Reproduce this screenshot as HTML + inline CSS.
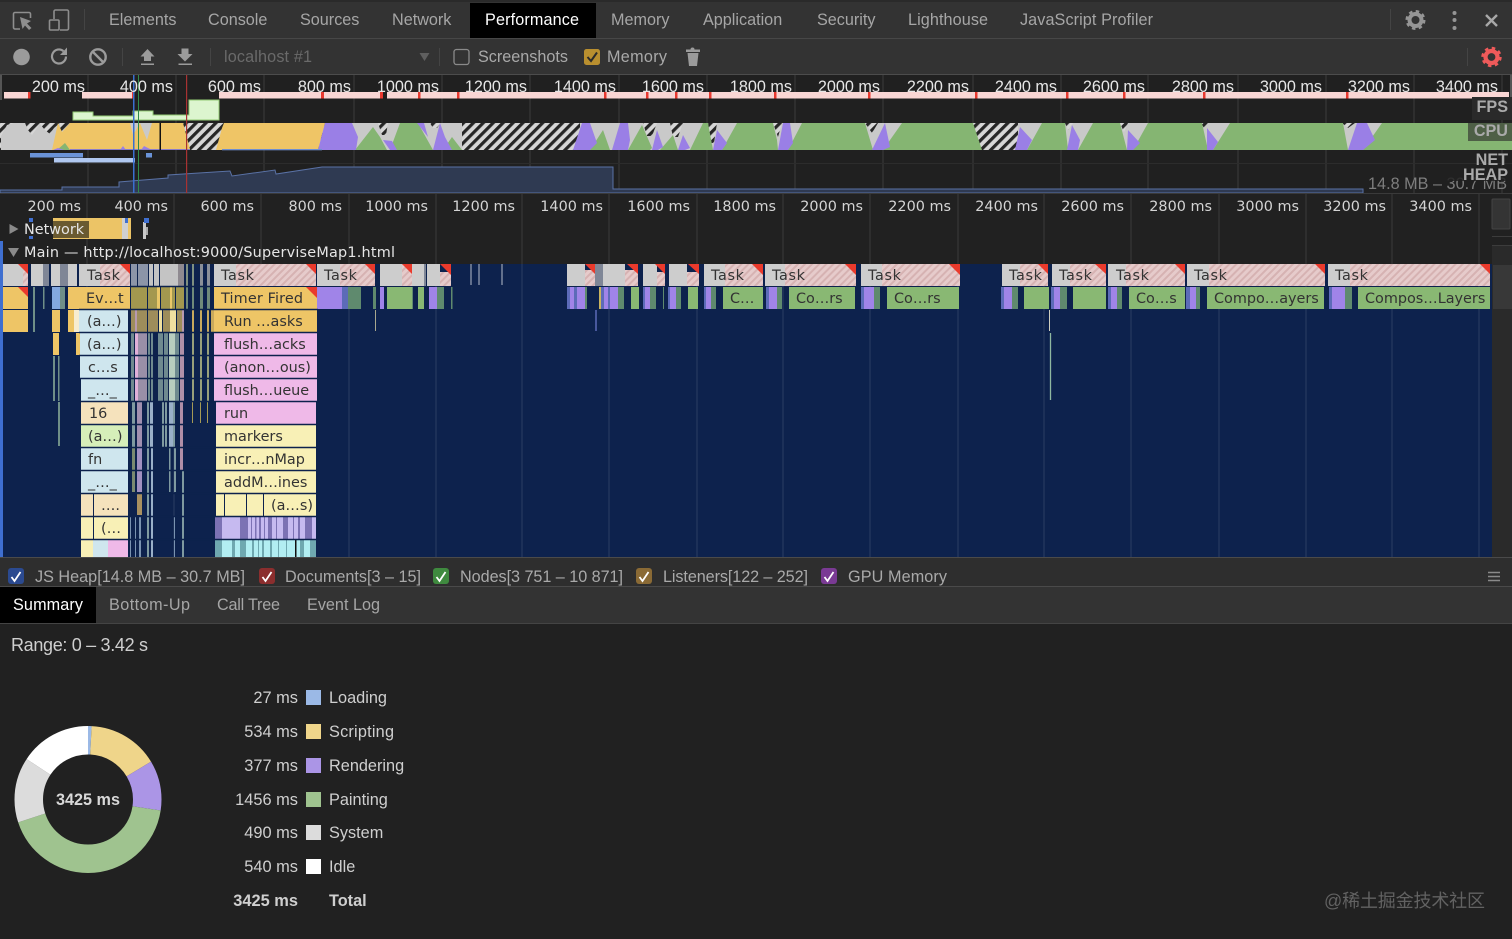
<!DOCTYPE html>
<html><head><meta charset="utf-8"><title>Performance</title>
<style>
html,body{margin:0;padding:0;background:#212121;overflow:hidden}
svg{display:block;position:absolute;left:0;top:0;filter:blur(.3px)}
text{font-family:"Liberation Sans",sans-serif;font-size:16.2px;fill:#a9a9a9}
.tab{fill:#a6a6a6}
.ov{fill:#e6e6e6;text-anchor:end}
.ru{font-family:"DejaVu Sans",sans-serif;font-size:14.4px;fill:#d4d4d4;text-anchor:end}
.f{font-family:"DejaVu Sans",sans-serif;font-size:14.4px;fill:#333}
.lb{font-weight:bold;text-anchor:end;fill:#aaa}
.n{fill:#cfcfcf;text-anchor:end;font-size:16.4px}
.l{fill:#cfcfcf;font-size:16.3px}
</style></head><body>
<svg width="1512" height="939" viewBox="0 0 1512 939" xmlns="http://www.w3.org/2000/svg">
<defs>
<pattern id="ch" width="7" height="7" patternUnits="userSpaceOnUse" patternTransform="rotate(-45)"><rect width="7" height="7" fill="#d6d6d6"/><rect width="7" height="3.2" fill="#262626"/></pattern>
<pattern id="th" width="5" height="5" patternUnits="userSpaceOnUse" patternTransform="rotate(-45)"><rect width="5" height="5" fill="#e6cbcb"/><rect width="5" height="2" fill="#d6b2b2"/></pattern>
</defs>
<rect width="1512" height="939" fill="#212121"/>
<!-- top tabs -->
<rect y="0" width="1512" height="75" fill="#333"/>
<rect y="0" width="1512" height="2" fill="#2a2a2a"/>
<rect y="38" width="1512" height="1" fill="#474747"/>
<rect y="74" width="1512" height="1" fill="#4c4c4c"/>
<rect x="470" y="3" width="126" height="35" fill="#000"/>
<g fill="none" stroke="#8e8e8e" stroke-width="1.6">
<path d="M20 29H15a1.5 1.5 0 0 1-1.5-1.5V14A1.5 1.5 0 0 1 15 12.500H29A1.500 1.500 0 0 1 30.500 14V18"/>
<rect x="49.500" y="20" width="9.500" height="10" rx="1"/>
<path d="M54 19V11.500a1.500 1.500 0 0 1 1.500-1.500H67a1.500 1.500 0 0 1 1.500 1.500V28.500A1.500 1.500 0 0 1 67 30H60"/>
</g>
<path d="M20 17 31 21 27 23.500 31.500 28 29 30 25 25.500 22.500 29Z" fill="#8e8e8e"/>
<rect x="84" y="9" width="1" height="21" fill="#444"/>
<text class="tab" x="109" y="25">Elements</text>
<text class="tab" x="208" y="25">Console</text>
<text class="tab" x="300" y="25">Sources</text>
<text class="tab" x="392" y="25">Network</text>
<text x="485" y="25" style="fill:#fff" textLength="94">Performance</text>
<text class="tab" x="611" y="25">Memory</text>
<text class="tab" x="703" y="25">Application</text>
<text class="tab" x="817" y="25">Security</text>
<text class="tab" x="908" y="25" textLength="80">Lighthouse</text>
<text class="tab" x="1020" y="25" textLength="133">JavaScript Profiler</text>
<rect x="1390" y="9" width="1" height="21" fill="#444"/>
<circle cx="1415.500" cy="20" r="6" fill="none" stroke="#959595" stroke-width="4"/>
<circle cx="1415.500" cy="20" r="8.500" fill="none" stroke="#959595" stroke-width="3" stroke-dasharray="3.400 3.270"/>
<circle cx="1454.500" cy="13" r="2" fill="#959595"/><circle cx="1454.500" cy="20" r="2" fill="#959595"/><circle cx="1454.500" cy="28" r="2" fill="#959595"/>
<path d="M1486 15 1497 26M1497 15 1486 26" stroke="#a8a8a8" stroke-width="2.400"/>
<!-- second toolbar -->
<circle cx="21.500" cy="57" r="8.300" fill="#9b9b9b"/>
<path d="M66 56.500a7 7 0 1 1-2.500-5.400" fill="none" stroke="#9b9b9b" stroke-width="2.200"/>
<path d="M67 47.500V55H60Z" fill="#9b9b9b"/>
<circle cx="98" cy="57" r="7.700" fill="none" stroke="#9b9b9b" stroke-width="2.400"/>
<path d="M92.500 51.500 103.500 62.500" stroke="#9b9b9b" stroke-width="2.400"/>
<rect x="122" y="48" width="1" height="18" fill="#444"/>
<path d="M147.500 49 154.500 56.500H151V61H144V56.500H140.500ZM141 63.500H154V65H141Z" fill="#9b9b9b"/>
<path d="M181.500 48.500H188.500V54H192.500L185 61.500 177.500 54H181.500ZM178.500 63.500H192V65H178.500Z" fill="#9b9b9b"/>
<rect x="210" y="48" width="1" height="18" fill="#444"/>
<text x="224" y="62" style="fill:#6a6a6a" textLength="88">localhost #1</text>
<path d="M419.500 53H429.500L424.500 61Z" fill="#5f5f5f"/>
<rect x="439" y="48" width="1" height="18" fill="#444"/>
<rect x="454" y="49.500" width="15" height="15" rx="2.500" fill="none" stroke="#8a8a8a" stroke-width="1.300"/>
<text x="478" y="62" textLength="90">Screenshots</text>
<rect x="584" y="49" width="16" height="16" rx="2.500" fill="#b98f2f"/>
<path d="M587.500 57 591 61 597 52.500" fill="none" stroke="#2b2b2b" stroke-width="2"/>
<text x="607" y="62" textLength="60">Memory</text>
<path d="M690.500 49.500a2 2 0 0 1 4 0H700V52H686V49.500ZM687.500 53H698.500L697 66H689Z" fill="#9b9b9b"/>
<rect x="1467" y="48" width="1" height="18" fill="#444"/>
<circle cx="1491.500" cy="57" r="6" fill="none" stroke="#ee5a5a" stroke-width="4.200"/>
<circle cx="1491.500" cy="57" r="8.700" fill="none" stroke="#ee5a5a" stroke-width="3" stroke-dasharray="3.400 3.430"/>
<!-- overview -->
<rect y="75" width="1512" height="119" fill="#202020"/>
<rect x="0" y="75" width="2" height="25" fill="#555"/>
<rect x="1510" y="75" width="2" height="25" fill="#555"/>
<path d="M88 75v118M176 75v118M264 75v118M354 75v118M442 75v118M530 75v118M619 75v118M707 75v118M795 75v118M883 75v118M973 75v118M1061 75v118M1148 75v118M1238 75v118M1326 75v118M1414 75v118M1502 75v118" stroke="#3c3c3c"/>
<rect y="163" width="1512" height="1" fill="#2c2c2c"/>
<!-- fps -->
<path d="M4 92H30V98.500H4ZM82 92H133V98.500H82ZM219 92H383V98.500H219ZM387 92H1509V98.500H387Z" fill="#f9d6d4"/>
<path d="M28 92h2.500v6.500H28ZM132 92h2v6.500h-2ZM321 92h3v6.500h-3ZM380 92h3v6.500h-3ZM418 92h2.500v6.500H418ZM457 92h2.500v6.500H457ZM604 92h2.500v6.500H604ZM646 92h2.500v6.500H646ZM675 92h2.500v6.500H675ZM709 92h2.500v6.500H709ZM774 92h2.500v6.500H774ZM868 92h2.500v6.500H868ZM975 92h2.500v6.500H975ZM1066 92h2.500v6.500H1066ZM1123 92h2.500v6.500H1123ZM1203 92h2.500v6.500H1203ZM1346 92h2.500v6.500H1346Z" fill="#e8392f"/>
<path d="M73 120V112H93V116H133V111H153V115H189V100H219V120Z" fill="#dcf5cf" stroke="#93cc75" stroke-width="1"/>
<!-- cpu -->
<rect y="123" width="1512" height="27" fill="url(#ch)"/>
<path fill="#c9c9c9" d="M1 150V136L7 125 14 123 25 123 28 130 32 135 37 128 40 124 45 130 50 134 54 128 60 123 V150ZM130 123H158V150H130ZM352 123H462V150H352ZM580 123H973V150H580ZM1018 123H1512V150H1018Z"/>
<path fill="url(#ch)" d="M378 123H388L386 135 382 135ZM430 123H441L437 128 433 128ZM643 123H657L652 136 647 136ZM670 123H683L678 137 673 137ZM708 123H717L714 143 711 143ZM773 123H782L778 137ZM865 123H878L872 133ZM1065 123H1073L1068 130ZM1120 123H1128L1124 132ZM1201 123H1208L1204 128ZM1342 123H1355L1348 128Z"/>
<path fill="#efc566" d="M52 150 58 123 62 132 70 123H130L133 135 140 123 147 140 152 123H183L190 149ZM216 150 222 128 224 123 325 123 318 150Z"/>
<path fill="#85b572" d="M355 150 373 127 380 137 387 150ZM57 150 65 143 70 150ZM390 150 400 123H418L433 150ZM443 150 452 137 462 150ZM590 150 603 130 610 150ZM628 150 642 125 652 148 650 150ZM660 150 673 135 678 150ZM690 150 703 123H708L713 150ZM722 150 737 123H773L777 140 778 150ZM788 150 802 123H865L873 150ZM883 150 902 123H973L982 150ZM1027 150 1042 123H1065L1068 150ZM1078 150 1093 123H1120L1127 150ZM1133 150 1148 123H1202L1208 150ZM1213 150 1230 123H1343L1348 150ZM1363 150 1382 123H1512V150Z"/>
<path fill="#9a7fe6" d="M325 123H352L358 137 356 150H318ZM383 140 390 150H397L392 141ZM433 150 440 123 445 137 452 150ZM417 123H424L428 137ZM53 150 58 148 64 150ZM120 150 123 146 126 150ZM141 150 144 146 152 150ZM573 150 582 123H590L597 143 590 150ZM612 150 620 123H628L630 140 628 150ZM652 150 657 130 663 147 658 150ZM678 150 683 135 690 148 685 150ZM713 150 717 130 727 143 722 150ZM778 150 783 123H790L793 143 788 150ZM872 150 885 123 890 147 883 150ZM1015 150 1020 127 1032 140 1027 150ZM1067 150 1072 125 1080 140 1078 150ZM1127 150 1128 130 1140 143 1133 150ZM1207 150 1207 128 1218 142 1213 150ZM1348 150 1357 123H1367L1375 140 1363 150Z"/>
<rect x="70" y="149" width="120" height="1" fill="#8a7dc8"/>
<rect x="222" y="149" width="100" height="1.300" fill="#6f8fd0"/>
<rect x="159.500" y="123" width="1.500" height="27" fill="#111"/>
<!-- net -->
<rect x="30" y="153" width="53" height="4.500" fill="#6a93d8"/>
<rect x="54" y="158" width="81" height="4.500" fill="#b0c8f0"/>
<rect x="146" y="153" width="6" height="4.500" fill="#6a93d8"/>
<!-- heap -->
<path d="M0 193V190H62V187H119V182L168 178V175L230 171 232 176 275 170 276 174 322 167H613V189H1363V193Z" fill="#2f3a52" stroke="#5a72a6" stroke-width="1"/>
<!-- markers -->
<rect x="133" y="75" width="1.500" height="118" fill="#3a6fd0"/>
<rect x="138" y="75" width="1" height="118" fill="#2f8a4c"/>
<rect x="186" y="75" width="1.200" height="118" fill="#a83232"/>
<!-- overview labels -->
<text class="ov" x="85" y="92">200 ms</text><text class="ov" x="173" y="92">400 ms</text><text class="ov" x="261" y="92">600 ms</text><text class="ov" x="351" y="92">800 ms</text><text class="ov" x="439" y="92">1000 ms</text><text class="ov" x="527" y="92">1200 ms</text><text class="ov" x="616" y="92">1400 ms</text><text class="ov" x="704" y="92">1600 ms</text><text class="ov" x="792" y="92">1800 ms</text><text class="ov" x="880" y="92">2000 ms</text><text class="ov" x="969" y="92">2200 ms</text><text class="ov" x="1057" y="92">2400 ms</text><text class="ov" x="1145" y="92">2600 ms</text><text class="ov" x="1234" y="92">2800 ms</text><text class="ov" x="1322" y="92">3000 ms</text><text class="ov" x="1410" y="92">3200 ms</text><text class="ov" x="1498" y="92">3400 ms</text>
<rect x="1472" y="97" width="40" height="23" fill="#2a2a2a"/>
<text class="lb" x="1508" y="112">FPS</text>
<rect x="1468" y="123" width="44" height="18" fill="#4e5f46"/>
<text class="lb" x="1508" y="136">CPU</text>
<text class="lb" x="1508" y="165">NET</text>
<text x="1507" y="189" style="text-anchor:end;fill:#7e7e7e" textLength="139">14.8 MB – 30.7 MB</text>
<rect x="1440" y="166" width="72" height="15" fill="#212121" opacity=".85"/>
<text class="lb" x="1508" y="180">HEAP</text>
<rect y="193" width="1512" height="1" fill="#3a3a3a"/>
<!-- flame chart bg -->
<rect y="194" width="1512" height="70" fill="#212121"/>
<rect y="264" width="1492" height="293" fill="#0d224d"/>
<rect x="0" y="241" width="3" height="316" fill="#3f6fd0"/>
<rect x="1492" y="245" width="20" height="312" fill="#2a2a2a"/>
<rect x="1492" y="199" width="18" height="30" rx="1" fill="#343434" stroke="#444"/>
<rect x="1492" y="236" width="20" height="1" fill="#3c3c3c"/>
<rect x="1492" y="245" width="20" height="1" fill="#3c3c3c"/>
<rect x="1493" y="265" width="19" height="44" fill="#383838"/>
<path d="M87 194V264M174 194V264M261 194V264M349 194V264M436 194V264M522 194V264M609 194V264M697 194V264M783 194V264M870 194V264M958 194V264M1044 194V264M1131 194V264M1219 194V264M1306 194V264M1392 194V264M1479 194V264" stroke="#3a3a3a"/>
<path d="M87 264V557M174 264V557M261 264V557M349 264V557M436 264V557M522 264V557M609 264V557M697 264V557M783 264V557M870 264V557M958 264V557M1044 264V557M1131 264V557M1219 264V557M1306 264V557M1392 264V557M1479 264V557" stroke="#2c3e63"/>
<text class="ru" x="81" y="211">200 ms</text><text class="ru" x="168" y="211">400 ms</text><text class="ru" x="254" y="211">600 ms</text><text class="ru" x="342" y="211">800 ms</text><text class="ru" x="428" y="211">1000 ms</text><text class="ru" x="515" y="211">1200 ms</text><text class="ru" x="603" y="211">1400 ms</text><text class="ru" x="690" y="211">1600 ms</text><text class="ru" x="776" y="211">1800 ms</text><text class="ru" x="863" y="211">2000 ms</text><text class="ru" x="951" y="211">2200 ms</text><text class="ru" x="1038" y="211">2400 ms</text><text class="ru" x="1124" y="211">2600 ms</text><text class="ru" x="1212" y="211">2800 ms</text><text class="ru" x="1299" y="211">3000 ms</text><text class="ru" x="1386" y="211">3200 ms</text><text class="ru" x="1472" y="211">3400 ms</text>
<!-- network row -->
<rect x="53" y="218" width="69" height="21" fill="#ecc466"/>
<rect x="53" y="221" width="36" height="17" fill="#6a5a30"/>
<rect x="122" y="218" width="6" height="21" fill="#d0d0d0"/>
<rect x="128" y="218" width="3" height="21" fill="#ecc466"/>
<rect x="125" y="218" width="3" height="5" fill="#3f6fd0"/>
<rect x="143" y="222" width="3" height="17" fill="#c8c8c8"/>
<rect x="144" y="218" width="5" height="5" fill="#3f6fd0"/>
<rect x="146" y="227" width="2" height="8" fill="#aaa"/>
<rect x="29" y="218" width="4" height="4" fill="#3f6fd0"/>
<rect x="29" y="236" width="4" height="3" fill="#3f6fd0"/>
<path d="M9.500 224 18.500 229 9.500 234Z" fill="#8a8a8a"/>
<text x="24" y="234" style="font-family:'DejaVu Sans',sans-serif;font-size:14.4px;fill:#e6e6e6">Network</text>
<path d="M8 248H19L13.500 257Z" fill="#8a8a8a"/>
<text x="24" y="257" textLength="371" style="font-family:'DejaVu Sans',sans-serif;font-size:14.4px;fill:#e6e6e6">Main — http://localhost:9000/SuperviseMap1.html</text>
<!-- row 0 tasks -->
<path fill="#cdcdcd" d="M3 264h25v22H3ZM31 264h12v22H31ZM51 264h9v22H51ZM68 264h9v22H68ZM79 264h21v22H79ZM214 264h22v22H214ZM317 264h23v22H317ZM380 264h22v22H380ZM412 264h12v22H412ZM427 264h13v22H427ZM567 264h18v22H567ZM603 264h22v22H603ZM643 264h14v22H643ZM669 264h18v22H669ZM704 264h21v22H704ZM765 264h20v22H765ZM861 264h21v22H861ZM1002 264h18v22H1002ZM1052 264h18v22H1052ZM1108 264h18v22H1108ZM1187 264h22v22H1187ZM1328 264h22v22H1328Z"/>
<path fill="#7f8696" d="M43 264h6v22H43ZM60 264h8v22H60ZM424 264h2v22h-2ZM595 264h8v22h-8Z"/>
<path fill="url(#th)" d="M23 271h5v15h-5ZM100 264h30v22H100ZM236 264h80v22H236ZM340 264h35v22H340ZM402 264h10v22H402ZM440 272h11v14H440ZM585 270h10v16H585ZM625 270h13v16H625ZM657 272h8v14H657ZM687 272h12v14H687ZM725 264h38v22H725ZM785 264h71v22H785ZM882 264h78v22H882ZM1020 264h28v22H1020ZM1070 264h36v22H1070ZM1126 264h59v22H1126ZM1209 264h116v22H1209ZM1350 264h140v22H1350Z"/>
<path fill="#ea3a2c" d="M18 264H28V274ZM120 264H130V274ZM306 264H316V274ZM365 264H375V274ZM402 264H412V274ZM440 264H451V275ZM585 264H595V274ZM627 264H638V274ZM655 264H665V274ZM688 264H699V274ZM752 264H763V275ZM845 264H856V275ZM949 264H960V275ZM1038 264H1048V274ZM1095 264H1106V274ZM1175 264H1185V274ZM1315 264H1325V274ZM1480 264H1490V274Z"/>
<path d="M471 264v21M479 264v21M502 264v21" stroke="#b8bfcc"/>
<!-- dense strips -->
<path fill="#8c95a8" d="M131 264h6v22h-6ZM138 264h10v22h-10Z"/>
<path fill="#c4c4c4" d="M149 264h4v22h-4ZM154 264h5v22h-5ZM160 264h18v22h-18Z"/>
<path fill="#8f8a90" d="M178 264h6v22h-6Z"/>
<path fill="#7f9080" d="M186 264h2v22h-2ZM192 264h2v22h-2Z"/>
<path fill="#8a8f98" d="M200 264h3v22h-3ZM207 264h3v22h-3Z"/>
<path fill="#a3984f" d="M131 287h16v22h-16ZM148 287h9v22h-9ZM161 287h14v22h-14ZM176 287h8v22h-8Z"/>
<path fill="#eac869" d="M157 287h3v22h-3ZM170 287h2v22h-2Z"/>
<path fill="#6f8a7a" d="M186 287h2v22h-2ZM192 287h2v22h-2ZM200 287h3v22h-3ZM207 287h3v22h-3Z"/>
<path fill="#9e8d5b" d="M131 310h16v22h-16ZM148 310h10v22h-10ZM163 310h7v22h-7ZM177 310h5v22h-5Z"/>
<path fill="#f0e0a0" d="M159 310h3v22h-3ZM170 310h6v22h-6Z"/>
<path fill="#b89ab0" d="M182 310h2v22h-2ZM135 310h2v22h-2Z"/>
<path fill="#c9a95c" d="M192 310h2v22h-2ZM200 310h2v22h-2ZM207 310h2v22h-2ZM211 310h3v22h-3Z"/>
<path fill="#6f8a8f" d="M131 333h3v68h-3ZM148 333h2v68h-2ZM151 333h2v68h-2ZM158 333h5v68h-5ZM175 333h4v68h-4ZM164 333h4v68h-4Z"/>
<path fill="#e0b0d8" d="M135 333h3v68h-3Z"/>
<path fill="#9a8fa8" d="M138 333h9v68h-9Z"/>
<path fill="#b8cdbf" d="M169 333h6v68h-6Z"/>
<path fill="#b090a8" d="M180 333h4v68h-4Z"/>
<path fill="#99a07a" d="M192 333h2v68h-2ZM200 333h2v68h-2ZM207 333h2v68h-2Z"/>
<path fill="#7f9aa0" d="M132 402h3v46h-3ZM147 402h2v46h-2ZM162 402h2v46h-2ZM165 402h2v46h-2ZM173 402h2v46h-2Z"/>
<path fill="#a08fb0" d="M137 402h5v46h-5Z"/>
<path fill="#9ab0c8" d="M150 402h3v46h-3ZM169 402h4v46h-4Z"/>
<path fill="#b08fa8" d="M180 402h3v46h-3Z"/>
<path fill="#a59a55" d="M192 402h1v21h-1ZM200 402h1v21h-1ZM207 402h1v21h-1Z"/>
<path fill="#7a8a70" d="M132 448h3v44h-3Z"/>
<path fill="#a090c0" d="M137 448h5v44h-5Z"/>
<path fill="#7f9aa0" d="M147 448h2v109h-2ZM169 448h1.500v44h-1.500ZM174 448h2v44h-2Z"/>
<path fill="#9ab0c8" d="M151 448h2v109h-2Z"/>
<path fill="#b08fa8" d="M180 448h3v23h-3Z"/>
<path fill="#7f9aa0" d="M182 471h2v86h-2Z"/>
<path fill="#a89060" d="M137 494h5v21h-5Z"/>
<path fill="#7a93b0" d="M139 517h2v40h-2ZM130 517h1v40h-1ZM135 517h1v40h-1ZM174 517h1v40h-1Z"/>
<!-- row 1+ left small -->
<path fill="#eec566" d="M3 287h25v22H3ZM3 310h25v22H3ZM68 287h11v22H68ZM79 287h51v22H79ZM214 287h103v22H214ZM52 310h8v22h-8ZM68 310h6v22h-6ZM53 333h6v22h-6ZM76 333h4v22h-4ZM214 310h103v22H214Z"/>
<path fill="#f7ecd0" d="M74 310h5v22h-5Z"/>
<path fill="#83a8e0" d="M52 287h8v22h-8Z"/>
<path fill="#6f8f88" d="M60 287h5v22h-5ZM33 287h2v45h-2ZM43 287h1.500v22h-1.500ZM53 356h2v45h-2ZM58 356h1.500v45h-1.500ZM58 402h2v44h-2Z"/>
<path fill="#cfe6ee" d="M79 310h49v22H79ZM80 333h48v22H80ZM80 356h48v22H80ZM81 379h47v22H81ZM81 448h47v22H81ZM81 471h47v22H81ZM93 540h15v17H93Z"/>
<path fill="#f5e2bc" d="M81 402h47v22H81ZM81 494h12v22H81ZM94 494h34v22H94Z"/>
<path fill="#d6eeb9" d="M81 425h47v22H81Z"/>
<path fill="#f8f0b6" d="M81 517h12v22H81ZM94 517h34v22H94ZM81 540h12v17H81Z"/>
<path fill="#efb9e8" d="M108 540h20v17H108ZM214 333h103v22H214ZM214 356h103v22H214ZM214 379h103v22H214ZM216 402h100v22H216Z"/>
<path fill="#f8f0b6" d="M216 425h100v22H216ZM216 448h100v22H216ZM216 471h100v22H216ZM216 494h8v22h-8ZM225 494h21v22h-21ZM247 494h16v22h-16ZM264 494h52v22H264Z"/>
<path fill="#c6baf0" d="M215 517h101v22H215Z"/>
<path fill="#7c72b4" d="M215 517h7v22h-7ZM240 517h8v22h-8ZM251 517h1v22h-1ZM255 517h1.500v22h-1.500ZM259 517h2v22h-2ZM264 517h1v22h-1ZM268 517h4v22h-4ZM276 517h1v22h-1ZM283 517h5v22h-5ZM293 517h1v22h-1ZM298 517h2v22h-2ZM305 517h7v22h-7Z"/>
<path fill="#b2eef2" d="M215 540h101v17H215Z"/>
<path fill="#6fa8b0" d="M215 540h7v17h-7ZM232 540h3v17h-3ZM240 540h6v17h-6ZM252 540h2v17h-2ZM258 540h1v17h-1ZM262 540h2v17h-2ZM270 540h2v17h-2ZM278 540h1v17h-1ZM286 540h1v17h-1ZM300 540h4v17h-4ZM310 540h6v17h-6Z"/>
<rect x="295" y="540" width="1.500" height="17" fill="#111"/>
<!-- right of row 1 -->
<path fill="#a084e8" d="M317 287h25v22H317ZM380 287h4v22h-4ZM429 287h8v22h-8ZM570 287h4v22h-4ZM577 287h8v22h-8ZM604 287h4v22h-4ZM610 287h8v22h-8ZM645 287h5v22h-5ZM670 287h6v22h-6ZM706 287h5v22h-5ZM769 287h8v22h-8ZM864 287h10v22H864ZM1004 287h8v22h-8ZM1054 287h6v22h-6ZM1111 287h6v22h-6ZM1190 287h6v22h-6ZM1332 287h13v22H1332Z"/>
<path fill="#5c6bb8" d="M567 287h3v22h-3ZM574 287h3v22h-3ZM600 287h4v22h-4ZM608 287h2v22h-2ZM643 287h2v22h-2ZM668 287h2v22h-2ZM704 287h2v22h-2ZM766 287h3v22h-3ZM861 287h3v22h-3ZM1001 287h3v22h-3ZM1051 287h3v22h-3ZM1108 287h3v22h-3ZM1186 287h4v22h-4ZM1329 287h3v22h-3ZM342 287h6v22h-6Z"/>
<path fill="#5f8a6e" d="M348 287h13v22H348ZM373 287h3v22h-3ZM437 287h7v22h-7ZM451 287h1.500v22H451ZM618 287h6v22h-6ZM650 287h6v22h-6ZM663 287h1v22h-1ZM676 287h5v22h-5ZM711 287h5v22h-5ZM777 287h5v22h-5ZM874 287h6v22h-6ZM1012 287h6v22h-6ZM1060 287h7v22h-7ZM1117 287h5v22h-5ZM1196 287h4v22h-4ZM1345 287h7v22h-7ZM585 287h2v22h-2ZM412 287h1v22h-1Z"/>
<path fill="#89b873" d="M387 287h25v22H387ZM418 287h6v22h-6ZM631 287h8v22h-8ZM688 287h10v22H688ZM723 287h40v22H723ZM789 287h66v22H789ZM887 287h72v22H887ZM1024 287h25v22H1024ZM1073 287h33v22H1073ZM1129 287h56v22H1129ZM1207 287h117v22H1207ZM1358 287h132v22H1358Z"/>
<path fill="#c9b45f" d="M599 287h2v22h-2Z"/>
<!-- separators across dense -->
<path d="M130 286.500H214M130 309.500H214M130 332.500H214M130 355.500H214M130 378.500H214M130 401.500H214M130 424.500H214M130 447.500H214M130 470.500H214M130 493.500H214M130 516.500H214M130 539.500H214" stroke="#0d224d" stroke-width="1.500"/>
<path d="M214 309.500H318M214 332.500H318M214 355.500H318M214 378.500H318M214 401.500H318M214 424.500H318M214 447.500H318M214 470.500H318M214 493.500H318M214 516.500H318M214 539.500H318M79 309.500H130M79 332.500H130M79 355.500H130M79 378.500H130M79 401.500H130M79 424.500H130M79 447.500H130M79 470.500H130M79 493.500H130M79 516.500H130M79 539.500H130" stroke="#0d224d" stroke-width="1.500"/>
<!-- thin lines -->
<path d="M375.500 310v21" stroke="#a7a78f"/>
<path d="M596 310v21" stroke="#5c6bb8" stroke-width="1.500"/>
<path d="M1049.500 310v21" stroke="#cfcfbf"/>
<path d="M1050.500 333v67" stroke="#8fb8a0" stroke-width="1.300"/>
<!-- triangles row 1 -->
<path fill="#ea3a2c" d="M18 287H28V297ZM306 287H317V298Z"/>
<!-- flame labels -->
<text class="f" x="87" y="280" textLength="33">Task</text><text class="f" x="221" y="280" textLength="33">Task</text><text class="f" x="324" y="280" textLength="33">Task</text><text class="f" x="711" y="280" textLength="33">Task</text><text class="f" x="772" y="280" textLength="33">Task</text><text class="f" x="868" y="280" textLength="33">Task</text><text class="f" x="1009" y="280" textLength="33">Task</text><text class="f" x="1059" y="280" textLength="33">Task</text><text class="f" x="1116" y="280" textLength="33">Task</text><text class="f" x="1194" y="280" textLength="33">Task</text><text class="f" x="1335" y="280" textLength="33">Task</text>
<text class="f" x="86" y="303">Ev…t</text><text class="f" x="221" y="303" textLength="82">Timer Fired</text><text class="f" x="730" y="303">C…</text><text class="f" x="796" y="303">Co…rs</text><text class="f" x="894" y="303">Co…rs</text><text class="f" x="1136" y="303">Co…s</text><text class="f" x="1214" y="303">Compo…ayers</text><text class="f" x="1365" y="303">Compos…Layers</text>
<text class="f" x="87" y="326">(a…)</text><text class="f" x="224" y="326">Run …asks</text>
<text class="f" x="87" y="349">(a…)</text><text class="f" x="224" y="349">flush…acks</text>
<text class="f" x="88" y="372">c…s</text><text class="f" x="224" y="372">(anon…ous)</text>
<text class="f" x="88" y="395">_…_</text><text class="f" x="224" y="395">flush…ueue</text>
<text class="f" x="89" y="418">16</text><text class="f" x="224" y="418">run</text>
<text class="f" x="88" y="441">(a…)</text><text class="f" x="224" y="441">markers</text>
<text class="f" x="88" y="464">fn</text><text class="f" x="224" y="464">incr…nMap</text>
<text class="f" x="88" y="487">_…_</text><text class="f" x="224" y="487">addM…ines</text>
<text class="f" x="101" y="510">….</text><text class="f" x="271" y="510">(a…s)</text>
<text class="f" x="101" y="533">(…</text>
<!-- legend bar -->
<rect y="557" width="1512" height="30" fill="#2e2e2e"/>
<rect y="557" width="1512" height="1" fill="#4a4a4a"/>
<rect y="586" width="1512" height="1" fill="#4a4a4a"/>
<g stroke="#fff" stroke-width="1.800" fill="none">
<rect x="8" y="568" width="16" height="16" rx="3" fill="#2b4a90" stroke="none"/><path d="M11.500 577 14.500 581 20.500 572"/>
<rect x="259" y="568" width="16" height="16" rx="3" fill="#8b2e2e" stroke="none"/><path d="M262.500 577 265.500 581 271.500 572"/>
<rect x="433" y="568" width="16" height="16" rx="3" fill="#3f8a3f" stroke="none"/><path d="M436.500 577 439.500 581 445.500 572"/>
<rect x="636" y="568" width="16" height="16" rx="3" fill="#8a6a35" stroke="none"/><path d="M639.500 577 642.500 581 648.500 572"/>
<rect x="821" y="568" width="16" height="16" rx="3" fill="#7a3a94" stroke="none"/><path d="M824.500 577 827.500 581 833.500 572"/>
</g>
<text x="35" y="582" textLength="210">JS Heap[14.8 MB – 30.7 MB]</text>
<text x="285" y="582" textLength="136">Documents[3 – 15]</text>
<text x="460" y="582" textLength="163">Nodes[3 751 – 10 871]</text>
<text x="663" y="582" textLength="145">Listeners[122 – 252]</text>
<text x="848" y="582" textLength="99">GPU Memory</text>
<path d="M1488 572.500H1500M1488 576.500H1500M1488 580.500H1500" stroke="#8a8a8a" stroke-width="1.400"/>
<!-- bottom tabs -->
<rect y="587" width="1512" height="36" fill="#333"/>
<rect y="623" width="1512" height="1" fill="#444"/>
<rect x="0" y="587" width="96" height="36" fill="#000"/>
<text x="13" y="610" style="fill:#fff" textLength="70">Summary</text>
<text class="tab" x="109" y="610" textLength="81">Bottom-Up</text>
<text class="tab" x="217" y="610" textLength="63">Call Tree</text>
<text class="tab" x="307" y="610" textLength="73">Event Log</text>
<!-- summary -->
<text x="11" y="651" style="fill:#cfcfcf;font-size:18px" textLength="137">Range: 0 – 3.42 s</text>
<g fill="none" stroke-width="28.500" transform="rotate(-90 88 799.500)">
<circle cx="88" cy="799.500" r="59.250" stroke="#9bb9e6" stroke-dasharray="2.940 372.28"/>
<circle cx="88" cy="799.500" r="59.250" stroke="#efd58a" stroke-dasharray="58.060 372.28" stroke-dashoffset="-2.940"/>
<circle cx="88" cy="799.500" r="59.250" stroke="#ab95e6" stroke-dasharray="40.990 372.28" stroke-dashoffset="-61"/>
<circle cx="88" cy="799.500" r="59.250" stroke="#9fc38f" stroke-dasharray="158.310 372.28" stroke-dashoffset="-101.990"/>
<circle cx="88" cy="799.500" r="59.250" stroke="#dcdcdc" stroke-dasharray="53.280 372.28" stroke-dashoffset="-260.300"/>
<circle cx="88" cy="799.500" r="59.250" stroke="#ffffff" stroke-dasharray="58.710 372.28" stroke-dashoffset="-313.580"/>
</g>
<text x="88" y="805" style="font-weight:bold;fill:#d8d8d8;text-anchor:middle">3425 ms</text>
<text class="n" x="298" y="703">27 ms</text><rect x="306" y="690" width="15" height="15" fill="#9bb9e6"/><text class="l" x="329" y="703">Loading</text>
<text class="n" x="298" y="737">534 ms</text><rect x="306" y="724" width="15" height="15" fill="#efd58a"/><text class="l" x="329" y="737" textLength="65">Scripting</text>
<text class="n" x="298" y="771">377 ms</text><rect x="306" y="758" width="15" height="15" fill="#ab95e6"/><text class="l" x="329" y="771">Rendering</text>
<text class="n" x="298" y="805">1456 ms</text><rect x="306" y="792" width="15" height="15" fill="#9fc38f"/><text class="l" x="329" y="805">Painting</text>
<text class="n" x="298" y="838">490 ms</text><rect x="306" y="825" width="15" height="15" fill="#dcdcdc"/><text class="l" x="329" y="838">System</text>
<text class="n" x="298" y="872">540 ms</text><rect x="306" y="859" width="15" height="15" fill="#fff"/><text class="l" x="329" y="872">Idle</text>
<text class="n" x="298" y="906" style="font-weight:bold">3425 ms</text><text class="l" x="329" y="906" style="font-weight:bold">Total</text>
<text x="1324" y="907" textLength="161" style="font-family:'Liberation Sans','Noto Sans CJK SC',sans-serif;font-size:18px;fill:#626262">@稀土掘金技术社区</text>
</svg>
</body></html>
